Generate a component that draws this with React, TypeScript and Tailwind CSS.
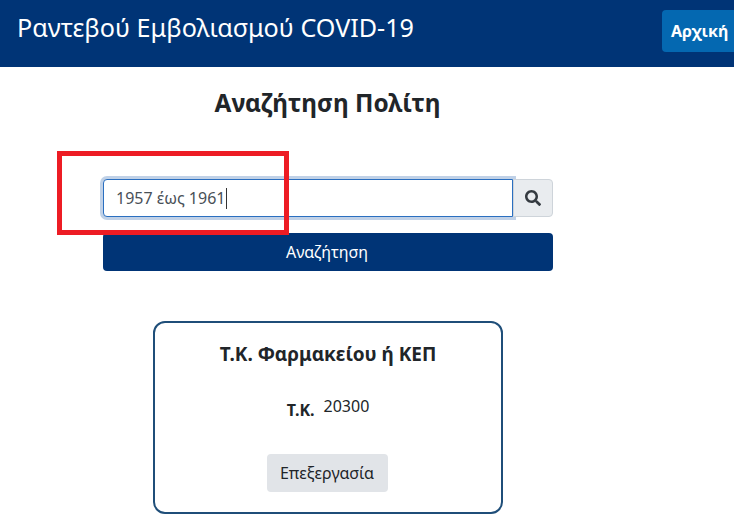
import React from 'react';
import { FaSearch } from 'react-icons/fa';

export default function App() {
  return (
    <div className="relative h-[526px] w-[734px] overflow-hidden bg-white font-['Noto_Sans',sans-serif] text-[#212529]">
      {/* Header */}
      <header className="flex h-[67px] items-start justify-between bg-[#003476] pl-[17px] pt-[9px]">
        <h1 className="text-[25.15px] leading-[36px] text-white">Ραντεβού Εμβολιασμού COVID-19</h1>
        <button className="mt-px h-[42px] w-[72px] rounded-l-[4px] bg-[#0468b1] pl-[9px] text-left text-[16px] font-bold text-white">
          Αρχική
        </button>
      </header>

      <main className="ml-[103px] w-[450px]">
        <h2 className="mt-[19px] pr-px text-center text-[24.4px] font-bold leading-[33px]">Αναζήτηση Πολίτη</h2>

        {/* Search */}
        <div className="mt-[60px] flex h-[38px]">
          <div className="flex h-[38px] w-[410px] items-center rounded-l-[4px] border border-[#2a6fc0] bg-white pl-[12px] text-[16px] text-[#495057] shadow-[0_0_0_3px_rgba(4,72,160,0.25)]">
            1957 έως 1961<span className="ml-px h-[21px] w-px bg-[#333]" />
          </div>
          <button className="flex h-[38px] w-[40px] items-center justify-center rounded-r-[4px] border border-[#ced4da] bg-[#e9ecef]">
            <FaSearch size={16} className="text-[#343a40]" />
          </button>
        </div>
        <button className="mt-[16px] h-[38px] w-full rounded-[4px] bg-[#003476] pr-[2px] text-[16px] text-white">Αναζήτηση</button>

        {/* Card */}
        <section className="mx-auto mt-[50px] h-[193px] w-[350px] rounded-[12px] border-2 border-[#1f4e79] pt-[18px] text-center">
          <h3 className="text-[19px] font-bold leading-[27px]">Τ.Κ. Φαρμακείου ή ΚΕΠ</h3>
          <div className="mt-[26px] flex items-start justify-center gap-[9px]">
            <span className="mt-[4px] text-[16px] font-bold leading-[24px]">Τ.Κ.</span>
            <span className="text-[16px] leading-[24px]">20300</span>
          </div>
          <button className="mr-[2px] mt-[32px] h-[38px] w-[121px] rounded-[4px] bg-[#e1e4e8] text-[16px]">Επεξεργασία</button>
        </section>
      </main>

      {/* Annotation */}
      <div className="absolute left-[57px] top-[151px] h-[84px] w-[232px] border-[5px] border-[#ed1c24]" />
    </div>
  );
}
